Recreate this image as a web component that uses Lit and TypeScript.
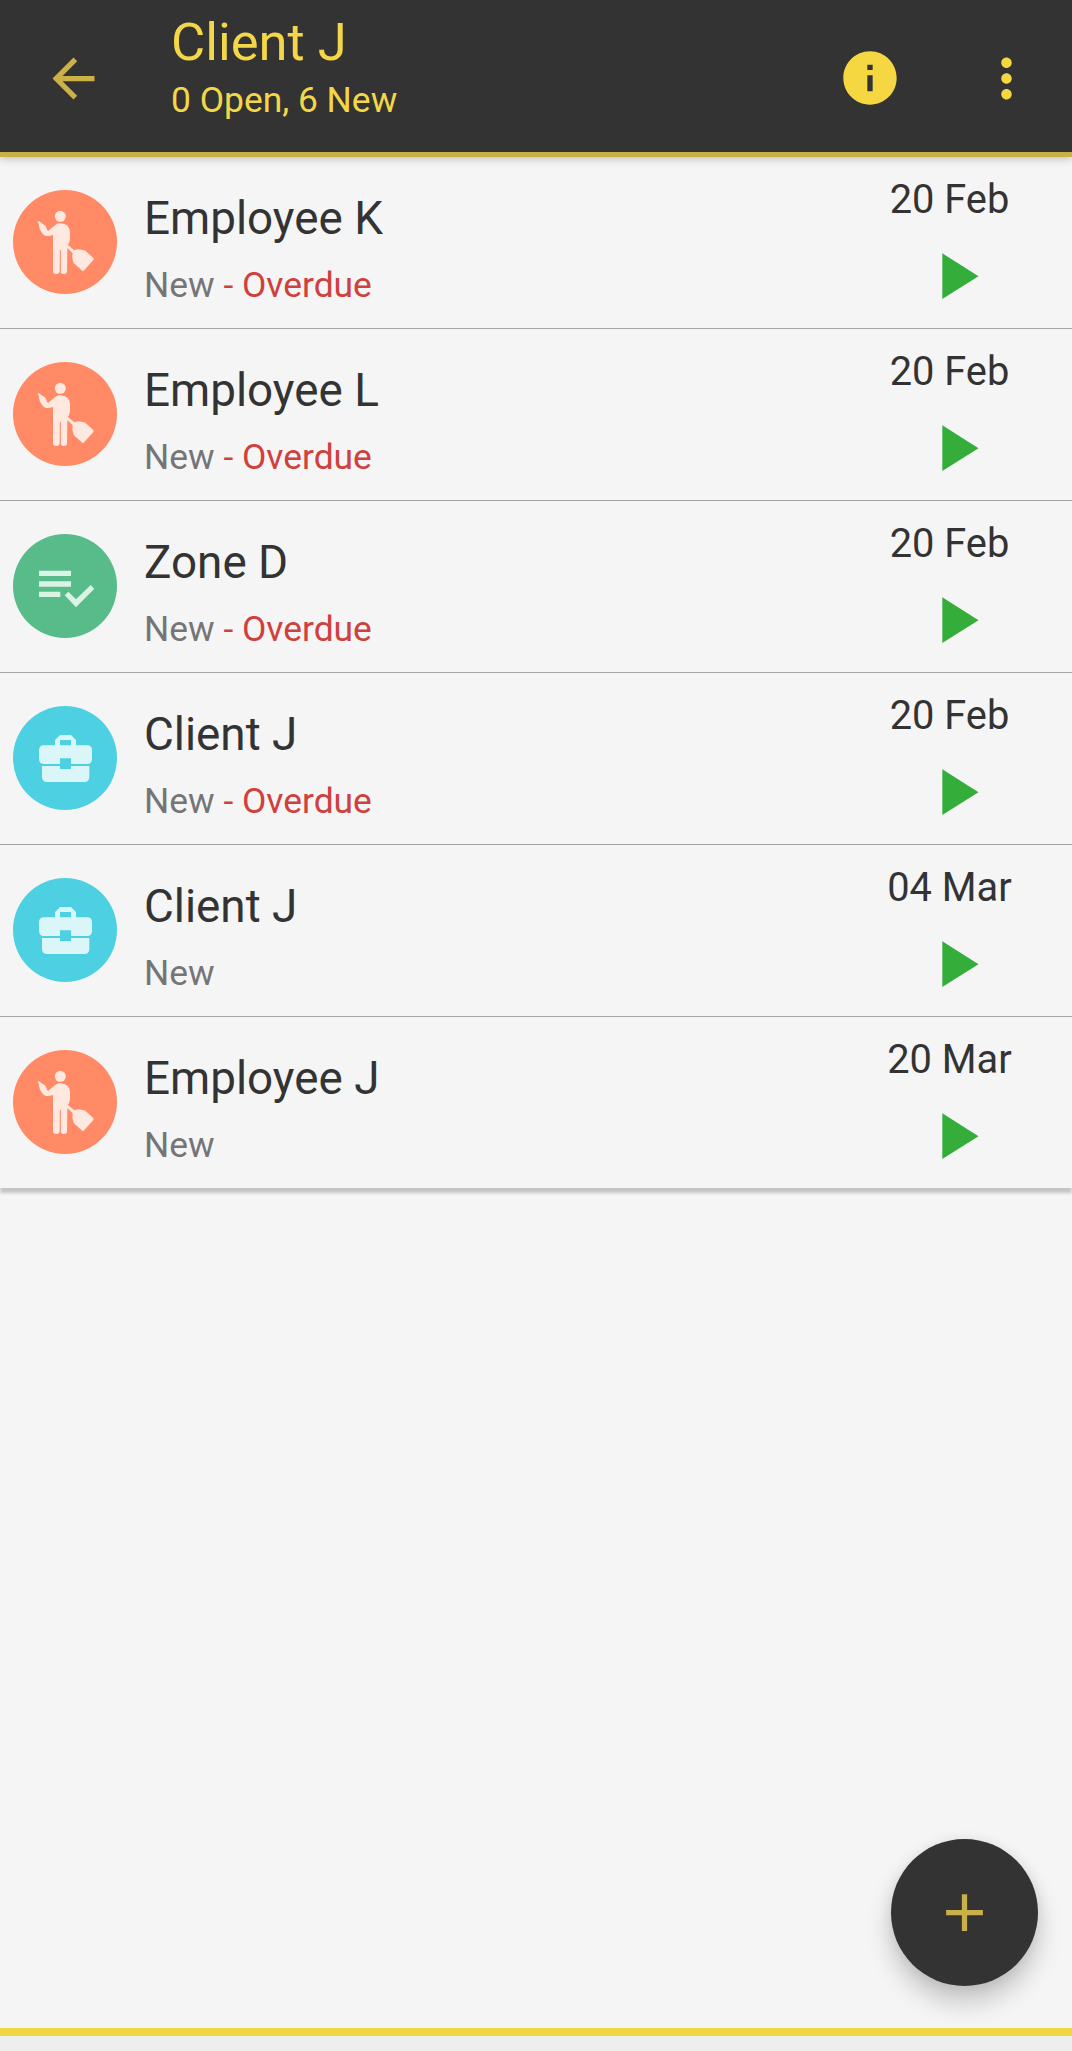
import { LitElement, html, css, svg } from "lit";
import { customElement, property } from "lit/decorators.js";

type Kind = "employee" | "zone" | "client";

interface Task {
  kind: Kind;
  name: string;
  overdue: boolean;
  date: string;
}

const TASKS: Task[] = [
  { kind: "employee", name: "Employee K", overdue: true, date: "20 Feb" },
  { kind: "employee", name: "Employee L", overdue: true, date: "20 Feb" },
  { kind: "zone", name: "Zone D", overdue: true, date: "20 Feb" },
  { kind: "client", name: "Client J", overdue: true, date: "20 Feb" },
  { kind: "client", name: "Client J", overdue: false, date: "04 Mar" },
  { kind: "employee", name: "Employee J", overdue: false, date: "20 Mar" },
];

// Avatar glyphs share a 312-unit square that spans the whole circle.
const GLYPHS = {
  employee: svg`
    <circle cx="142" cy="79" r="16.5"/>
    <path d="M74 95 Q78 91 82 97 L97 107 Q101 112 102 120 L106 122 Q117 112 128 104 Q134 100 142 100 Q171 100 171 130 L171 148 Q170 158 165 165 L184 181 Q194 176 206 179 L217 182 L241 204 Q243 207 241 210 L212 242 Q209 244 206 241 L182 219 Q176 206 179 190 L163 174 L162 246 Q161 252 153 252 Q144 252 143.500 246 L143.500 180 L140.500 180 L140 246 Q138 252 130 252 Q121 252 120 246 L120 135 Q109 139 99 138 Q91 136 85 126 Q79 117 78 108 L77 100 Q73 98 74 95Z"/>`,
  zone: svg`
    <path d="M78 110h96v16H78zM78 142h96v16H78zM78 173h64v16H78z"/>
    <path d="M155 184l11-11 23 23 44-43 11 11-55 56z"/>`,
  client: svg`
    <path fill-rule="evenodd" d="M126 118V102L141 87H174L189 102V118H222Q237 118 237 133V158Q237 174 222 174H174V157H141V174H93Q78 174 78 158V133Q78 118 93 118ZM141 118H174V102H141Z"/>
    <path d="M87 180H141V189H174V180H229V212Q229 228 213 228H103Q87 228 87 212Z"/>`,
};

@customElement("task-row")
export class TaskRow extends LitElement {
  @property({ attribute: false }) task!: Task;

  static styles = css`
    :host {
      display: flex;
      box-sizing: border-box;
      height: 172px;
      border-bottom: 1px solid #a6a6a6;
      padding-left: 13px;
    }
    .avatar {
      flex: none;
      width: 104px;
      height: 104px;
      margin-top: 33px;
      border-radius: 50%;
    }
    .avatar svg {
      display: block;
      width: 104px;
      height: 104px;
    }
    .employee { background: #ff8a65; fill: #ffe8e0; }
    .zone { background: #58bb8a; fill: #d9f3e5; }
    .client { background: #4dd0e1; fill: #dbf6f9; }
    .text {
      flex: 1;
      padding: 35px 0 0 27px;
      white-space: nowrap;
    }
    .name {
      font-size: 45.8px;
      line-height: 54px;
      color: #333;
    }
    .status {
      margin-top: 18px;
      font-size: 35.4px;
      line-height: 42px;
      color: #757575;
    }
    .overdue { color: #d0403c; }
    .side {
      flex: none;
      width: 245px;
      padding-top: 19px;
      display: flex;
      flex-direction: column;
      align-items: center;
    }
    .date {
      font-size: 39.8px;
      line-height: 48px;
      color: #333;
    }
    .play {
      margin: 29px 0 0 22px;
      width: 37px;
      height: 46px;
      fill: #35ad3b;
    }
  `;

  render() {
    const t = this.task;
    return html`
      <div class="avatar ${t.kind}">
        <svg viewBox="0 0 312 312">${GLYPHS[t.kind]}</svg>
      </div>
      <div class="text">
        <div class="name">${t.name}</div>
        <div class="status">New${t.overdue ? html`<span class="overdue"> - Overdue</span>` : ""}</div>
      </div>
      <div class="side">
        <div class="date">${t.date}</div>
        <svg class="play" viewBox="0 0 37 46"><path d="M0.3 0.3V46L36.5 23.2Z"/></svg>
      </div>
    `;
  }
}

@customElement("app-root")
export class AppRoot extends LitElement {
  static styles = css`
    :host {
      display: flex;
      flex-direction: column;
      position: relative;
      box-sizing: border-box;
      width: 100%;
      height: 2051px;
      overflow: hidden;
      background: #f5f5f5;
      font-family: Roboto, "Liberation Sans", sans-serif;
    }
    .bar {
      flex: none;
      display: flex;
      box-sizing: border-box;
      height: 157px;
      padding: 0 34px 0 42px;
      background: #333;
      border-bottom: 5px solid #c9b044;
      color: #f3d748;
      box-shadow: 0 2px 8px rgba(0, 0, 0, 0.22);
      z-index: 1;
    }
    .icon {
      flex: none;
      width: 63px;
      height: 63px;
      margin-top: 47px;
      fill: #f5d742;
    }
    .back { fill: #cbb146; }
    .info { width: 64px; height: 64px; margin: 45.5px 73px 0 0; }
    .heading {
      flex: 1;
      padding: 12px 0 0 66px;
      white-space: nowrap;
    }
    .title {
      font-size: 52.5px;
      line-height: 60px;
    }
    .counts {
      margin-top: 7px;
      font-size: 35.4px;
      line-height: 42px;
    }
    .list {
      flex: none;
      height: 1031px;
      background: #f5f5f5;
      box-shadow: 0 5px 3px rgba(0, 0, 0, 0.2);
    }
    .list task-row:last-of-type {
      border-bottom: 0;
      height: 171px;
    }
    .foot {
      flex: none;
      height: 15px;
      margin-top: auto;
      border-top: 8px solid #f1d644;
      background: #eee;
    }
    .fab {
      position: absolute;
      right: 34px;
      bottom: 65px;
      display: flex;
      align-items: center;
      justify-content: center;
      width: 147px;
      height: 147px;
      padding: 0;
      border: 0;
      border-radius: 50%;
      background: #333;
      box-shadow: 0 16px 26px rgba(0, 0, 0, 0.2), 0 2px 14px rgba(0, 0, 0, 0.08);
    }
    .plus {
      width: 63px;
      height: 63px;
      fill: #c9b04a;
    }
  `;

  render() {
    return html`
      <header class="bar">
        <svg class="icon back" viewBox="0 0 24 24"><path d="M20 11H7.83l5.59-5.59L12 4l-8 8 8 8 1.41-1.41L7.83 13H20v-2z"/></svg>
        <div class="heading">
          <div class="title">Client J</div>
          <div class="counts">0 Open, 6 New</div>
        </div>
        <svg class="icon info" viewBox="0 0 24 24"><path d="M12 2C6.48 2 2 6.48 2 12s4.480 10 10 10 10-4.480 10-10S17.520 2 12 2zm1 15h-2v-6h2v6zm0-8h-2V7h2v2z"/></svg>
        <svg class="icon" viewBox="0 0 24 24"><path d="M12 8c1.100 0 2-.9 2-2s-.9-2-2-2-2 .9-2 2 .9 2 2 2zm0 2c-1.100 0-2 .9-2 2s.9 2 2 2 2-.9 2-2-.9-2-2-2zm0 6c-1.100 0-2 .9-2 2s.9 2 2 2 2-.9 2-2-.9-2-2-2z"/></svg>
      </header>
      <main class="list">
        ${TASKS.map((t) => html`<task-row .task=${t}></task-row>`)}
      </main>
      <footer class="foot"></footer>
      <button class="fab" aria-label="Add">
        <svg class="plus" viewBox="0 0 24 24"><path d="M19 13h-6v6h-2v-6H5v-2h6V5h2v6h6v2z"/></svg>
      </button>
    `;
  }
}
